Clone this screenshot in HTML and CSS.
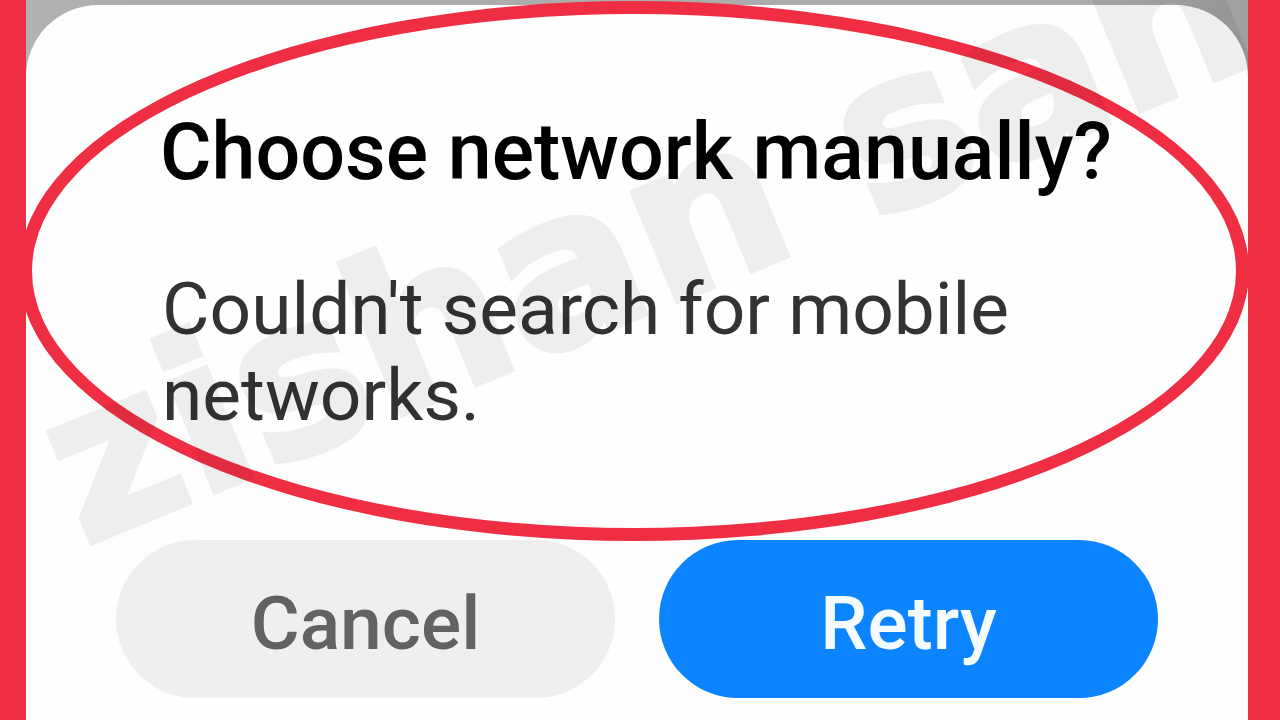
FILE: index.html
```
<!DOCTYPE html>
<html lang="en">
<head>
<meta charset="utf-8">
<title>Choose network manually?</title>
<link rel="stylesheet" href="styles.css">
</head>
<body>
<main class="screen">
  <section class="dialog" role="dialog" aria-labelledby="title">
    <div class="copy">
      <h1 class="title" id="title">Choose network manually?</h1>
      <p class="message">Couldn't search for mobile networks.</p>
    </div>
    <div class="actions">
      <button class="button cancel" type="button">Cancel</button>
      <button class="button retry" type="button">Retry</button>
    </div>
  </section>
  <div class="ring"></div>
  <div class="watermark">zishan sah</div>
</main>
</body>
</html>
```
FILE: styles.css
```
* {
  box-sizing: border-box;
}

body {
  margin: 0;
  font-family: Roboto, "Liberation Sans", sans-serif;
}

.screen {
  position: relative;
  min-height: 100vh;
  padding-top: 5px;
  border: solid #f02e43;
  border-width: 0 32px 0 26px;
  background: linear-gradient(90deg, #b2b2b2, #acacac 10%, #acacac 90%, #a0a0a0);
  overflow: hidden;
}

.dialog {
  display: flex;
  flex-direction: column;
  min-height: calc(100vh - 5px);
  padding: 101px 90px 22px;
  border-radius: 72px 72px 0 0;
  background: #fefefe;
}

.copy {
  flex: 1;
  padding: 0 44px;
}

.title {
  margin: 0 0 68px;
  font-size: 79px;
  font-weight: 500;
  line-height: 92px;
  color: #000;
  white-space: nowrap;
}

.message {
  margin: 0;
  padding-left: 2px;
  font-size: 73px;
  line-height: 86px;
  color: #333;
}

.actions {
  display: grid;
  grid-template-columns: 1fr 1fr;
  gap: 44px;
}

.button {
  height: 158px;
  padding: 8px 0 0;
  border: 0;
  border-radius: 79px;
  font: 500 75px/88px Roboto, "Liberation Sans", sans-serif;
}

.cancel {
  background: #efefef;
  color: #626262;
}

.retry {
  background: #0c84ff;
  color: #f4fcff;
}

.watermark {
  position: absolute;
  left: 67px;
  bottom: 150px;
  font: 700 215px/200px "DejaVu Sans", sans-serif;
  color: #000;
  -webkit-text-stroke: 6px #000;
  opacity: 0.06;
  white-space: nowrap;
  transform: rotate(-22.4deg);
  transform-origin: 0 100%;
  pointer-events: none;
}

.ring {
  position: absolute;
  top: 1px;
  left: -7px;
  right: -1px;
  height: 540px;
  border: 13px solid #f02e43;
  border-radius: 50%;
  pointer-events: none;
}
```
